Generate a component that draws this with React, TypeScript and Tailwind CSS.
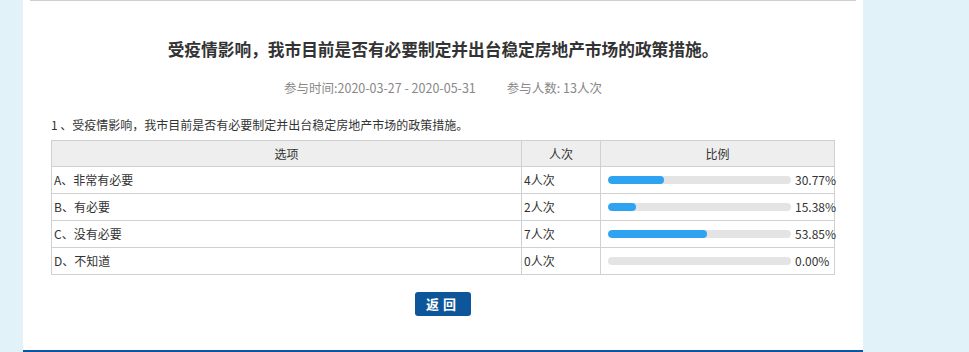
const rows = [
    {label: "A、非常有必要", count: "4人次", pct: 30.77},
    {label: "B、有必要", count: "2人次", pct: 15.38},
    {label: "C、没有必要", count: "7人次", pct: 53.85},
    {label: "D、不知道", count: "0人次", pct: 0},
];

export default function App() {
    return (
        <div
            className="flex h-[352px] w-full bg-[#e1f3f8] text-[#333]"
            style={{fontFamily: '"Noto Sans CJK SC", "Noto Sans", sans-serif'}}
        >
            <div className="ml-[23px] flex h-full w-[840px] flex-col border-b-2 border-[#0a55a5] bg-white">
                <div className="mx-[7px] h-px bg-[#cfcfcf]"/>

                {/* ===== TITLE ===== */}
                <h1 className="mt-[36px] text-center text-[16.7px] font-bold leading-[24px] text-[#333]">
                    受疫情影响，我市目前是否有必要制定并出台稳定房地产市场的政策措施。
                </h1>
                <div className="mt-[17px] flex justify-center gap-[31px] text-[12.5px] leading-[20px] text-[#888]">
                    <span>参与时间:2020-03-27 - 2020-05-31</span>
                    <span>参与人数: 13人次</span>
                </div>

                {/* ===== QUESTION ===== */}
                <div className="mx-[28px] mt-[18px] text-[12px] leading-[18px]">
                    1 、受疫情影响，我市目前是否有必要制定并出台稳定房地产市场的政策措施。
                </div>
                <table className="mx-[28px] mt-[6px] w-[784px] table-fixed border-collapse text-[12px]">
                    <colgroup>
                        <col className="w-[470px]"/>
                        <col className="w-[79px]"/>
                        <col/>
                    </colgroup>
                    <thead>
                    <tr className="h-[26px] bg-[#eee]">
                        <th className="border border-[#d0d0d0] font-normal">选项</th>
                        <th className="border border-[#d0d0d0] font-normal">人次</th>
                        <th className="border border-[#d0d0d0] font-normal">比例</th>
                    </tr>
                    </thead>
                    <tbody>
                    {rows.map((r) => (
                        <tr key={r.label} className="h-[27px]">
                            <td className="border border-[#d0d0d0] pl-[2px]">{r.label}</td>
                            <td className="border border-[#d0d0d0] pl-[2px]">{r.count}</td>
                            <td className="border border-[#d0d0d0] pl-[7px]">
                                <div className="flex items-center gap-[4px] whitespace-nowrap">
                                    <div className="h-[8px] w-[183px] shrink-0 overflow-hidden rounded-full bg-[#e4e4e4]">
                                        <div
                                            className="h-full rounded-full bg-[#2ea3f2]"
                                            style={{width: `${r.pct}%`}}
                                        />
                                    </div>
                                    <span>{r.pct.toFixed(2)}%</span>
                                </div>
                            </td>
                        </tr>
                    ))}
                    </tbody>
                </table>

                {/* ===== ACTIONS ===== */}
                <div className="mt-[17px] flex justify-center">
                    <button className="h-[24px] w-[56px] rounded-[3px] bg-[#0d5699] text-[13px] font-bold tracking-[4px] text-white">
                        返回
                    </button>
                </div>
            </div>
            <div className="flex-1"/>
        </div>
    );
}
